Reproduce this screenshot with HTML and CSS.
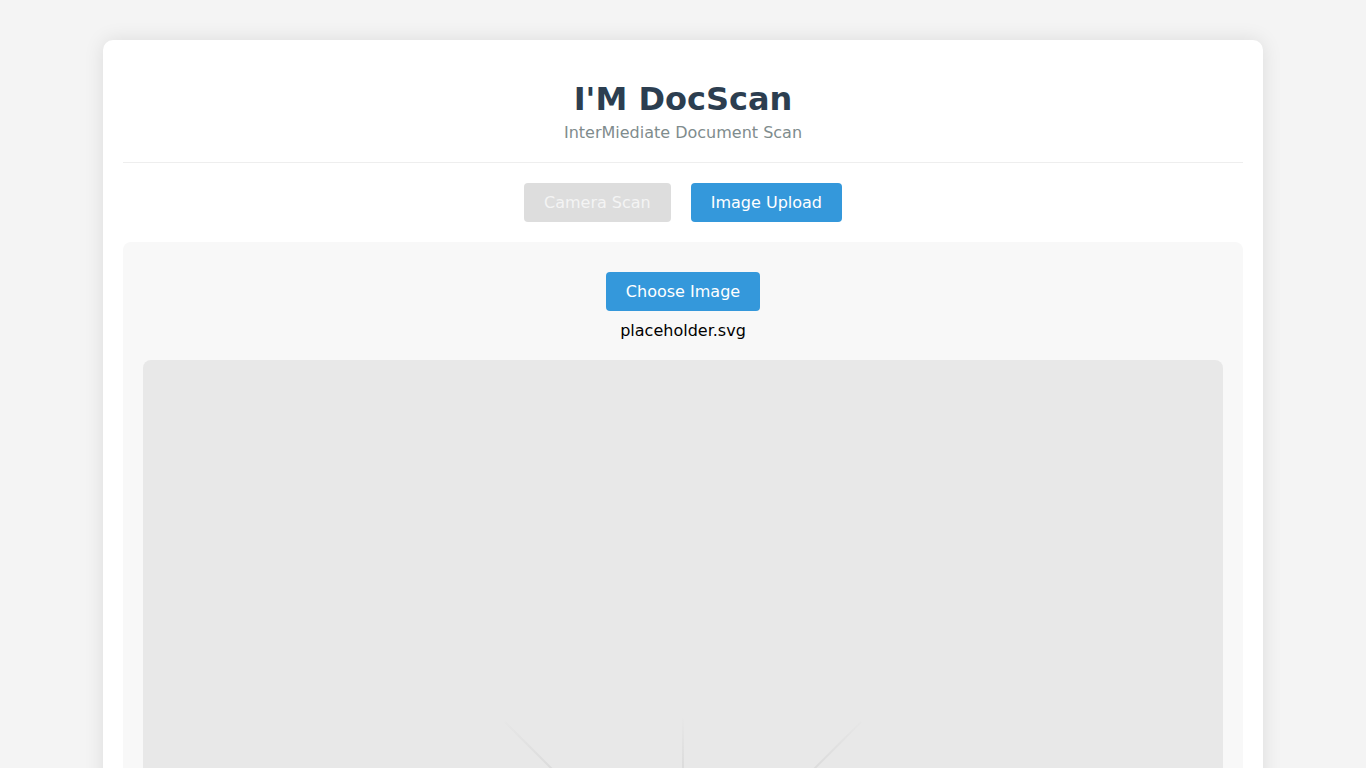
FILE: index.html
```html
<!DOCTYPE html>
<html lang="en">
<head>
<meta charset="utf-8">
<title>I'M DocScan</title>
<link rel="stylesheet" href="styles.css">
</head>
<body>
<div class="container">
  <header class="header">
    <h1 class="title">I'M DocScan</h1>
    <p class="subtitle">InterMiediate Document Scan</p>
  </header>
  <div class="modes">
    <button class="btn btn-disabled" type="button">Camera Scan</button>
    <button class="btn btn-primary" type="button">Image Upload</button>
  </div>
  <section class="upload">
    <button class="btn btn-primary choose" type="button">Choose Image</button>
    <div class="filename">placeholder.svg</div>
    <div class="preview">
      <svg class="rays" width="1080" height="760" viewBox="0 0 1080 760" xmlns="http://www.w3.org/2000/svg">
        <defs>
          <linearGradient id="fade" gradientUnits="userSpaceOnUse" x1="0" y1="355" x2="0" y2="440">
            <stop offset="0" stop-color="#dcdcdc" stop-opacity="0"/>
            <stop offset="0.6" stop-color="#dcdcdc" stop-opacity="1"/>
            <stop offset="1" stop-color="#dcdcdc" stop-opacity="1"/>
          </linearGradient>
        </defs>
        <g stroke="url(#fade)" stroke-width="2" fill="none">
          <path d="M362 362 L540 540"/>
          <path d="M718 362 L540 540"/>
          <path d="M540 358 L540 540"/>
        </g>
      </svg>
    </div>
  </section>
</div>
</body>
</html>
```

FILE: styles.css
```css
html, body {
  margin: 0;
  padding: 0;
}
body {
  background: #f4f4f4;
  font-family: "DejaVu Sans", sans-serif;
  color: #333;
  padding: 40px 0;
}
.container {
  width: 1120px;
  margin: 0 auto;
  background: #fff;
  border-radius: 10px;
  box-shadow: 0 0 20px rgba(0, 0, 0, 0.1);
  padding: 20px;
}
.header {
  text-align: center;
  padding-bottom: 20px;
  border-bottom: 1px solid #eee;
  margin-bottom: 20px;
}
.title {
  margin: 21px 0 0;
  font-size: 32px;
  line-height: 37px;
  color: #2c3e50;
}
.subtitle {
  margin: 5px 0 0;
  font-size: 16px;
  line-height: 19px;
  color: #7f8c8d;
}
.modes {
  display: flex;
  justify-content: center;
  gap: 20px;
  margin-bottom: 20px;
}
.btn {
  font-family: "DejaVu Sans", sans-serif;
  font-size: 16px;
  line-height: 19px;
  padding: 10px 20px;
  border: none;
  border-radius: 4px;
  color: #fff;
  cursor: pointer;
}
.btn-primary {
  background: #3498db;
}
.btn-disabled {
  background: #ddd;
  color: #f4f4f4;
}
.upload {
  background: #f8f8f8;
  border-radius: 8px;
  padding: 30px 20px 20px;
  display: flex;
  flex-direction: column;
  align-items: center;
}
.filename {
  margin-top: 10px;
  font-size: 16px;
  line-height: 19px;
  color: #000;
}
.preview {
  margin-top: 20px;
  align-self: stretch;
  height: 760px;
  background: #e8e8e8;
  border-radius: 8px;
  overflow: hidden;
  display: flex;
  justify-content: center;
}
.rays {
  display: block;
}
```
